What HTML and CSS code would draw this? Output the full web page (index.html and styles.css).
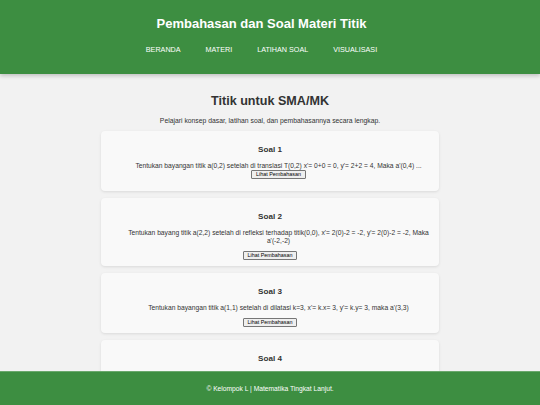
FILE: index.html
```html
<!DOCTYPE html>
<html lang="id">
<head>
<meta charset="utf-8">
<title>Pembahasan dan Soal Materi Titik</title>
<link rel="stylesheet" href="styles.css">
</head>
<body>
<header class="site-header">
  <h1 class="site-title">Pembahasan dan Soal Materi Titik</h1>
  <nav class="nav">
    <a href="#">BERANDA</a>
    <a href="#">MATERI</a>
    <a href="#">LATIHAN SOAL</a>
    <a href="#">VISUALISASI</a>
  </nav>
</header>
<main class="main">
  <h2 class="page-title">Titik untuk SMA/MK</h2>
  <p class="lead">Pelajari konsep dasar, latihan soal, dan pembahasannya secara lengkap.</p>
  <section class="card">
    <h3 class="card-title">Soal 1</h3>
    <p class="card-text">Tentukan bayangan titik a(0,2) setelah di translasi T(0,2) x'= 0+0 = 0, y'= 2+2 = 4, Maka a'(0,4) ...<button class="btn">Lihat Pembahasan</button></p>
  </section>
  <section class="card">
    <h3 class="card-title">Soal 2</h3>
    <p class="card-text">Tentukan bayang titik a(2,2) setelah di refleksi terhadap titik(0,0), x'= 2(0)-2 = -2, y'= 2(0)-2 = -2, Maka a'(-2,-2)</p>
    <button class="btn">Lihat Pembahasan</button>
  </section>
  <section class="card">
    <h3 class="card-title">Soal 3</h3>
    <p class="card-text">Tentukan bayangan titik a(1,1) setelah di dilatasi k=3, x'= k.x= 3, y'= k.y= 3, maka a'(3,3)</p>
    <button class="btn">Lihat Pembahasan</button>
  </section>
  <section class="card card-last">
    <h3 class="card-title">Soal 4</h3>
  </section>
</main>
<footer class="site-footer">© Kelompok L | Matematika Tingkat Lanjut.</footer>
</body>
</html>
```
FILE: styles.css
```css
* { box-sizing: border-box; }
html, body { margin: 0; padding: 0; }
body {
  background: #f2f2f2;
  color: #333;
  font-family: "Liberation Sans", Arial, sans-serif;
  height: 405px;
  overflow: hidden;
  display: flex;
  flex-direction: column;
}
.site-header {
  flex: none;
  background: #3d8e41;
  color: #fff;
  height: 74px;
  padding: 15px 17px 0 0;
  text-align: center;
  box-shadow: 0 2px 4px rgba(0,0,0,0.2);
  position: relative;
  z-index: 1;
}
.site-title {
  margin: 0;
  font-size: 13px;
  line-height: 18px;
  font-weight: bold;
}
.nav {
  margin-top: 12px;
  display: flex;
  justify-content: center;
  gap: 25px;
}
.nav a {
  color: #fff;
  text-decoration: none;
  font-size: 7.2px;
  line-height: 10px;
}
.main {
  flex: 1;
  min-height: 0;
  overflow: hidden;
  padding-top: 18px;
  text-align: center;
}
.page-title {
  margin: 0;
  font-size: 12.6px;
  line-height: 19px;
  font-weight: bold;
  color: #333;
}
.lead {
  margin: 5px 0 6px;
  font-size: 6.8px;
  line-height: 9px;
}
.card {
  width: 338px;
  margin: 0 auto 7px;
  background: #f9f9f9;
  border-radius: 4px;
  box-shadow: 0 1px 3px rgba(0,0,0,0.1);
  padding: 13px 9px 6px 9px;
}
.card-last {
  min-height: 60px;
}
.card-title {
  margin: 0;
  font-size: 8.1px;
  line-height: 11px;
  font-weight: bold;
}
.card-text {
  margin: 7px 0 6px;
  padding-left: 17px;
  font-size: 6.7px;
  line-height: 8px;
}
.btn {
  display: block;
  margin: 0 auto;
  font-family: "Liberation Sans", Arial, sans-serif;
  font-size: 5.4px;
  line-height: 7px;
  padding: 0 4px;
  height: 9px;
  border: 1px solid #767676;
  border-radius: 1px;
  background: #efefef;
  color: #000;
}
.site-footer {
  flex: none;
  height: 34px;
  background: #3d8e41;
  border-top: 1px solid #6aa86c;
  color: #fff;
  font-size: 6.7px;
  line-height: 33px;
  text-align: center;
}
```
